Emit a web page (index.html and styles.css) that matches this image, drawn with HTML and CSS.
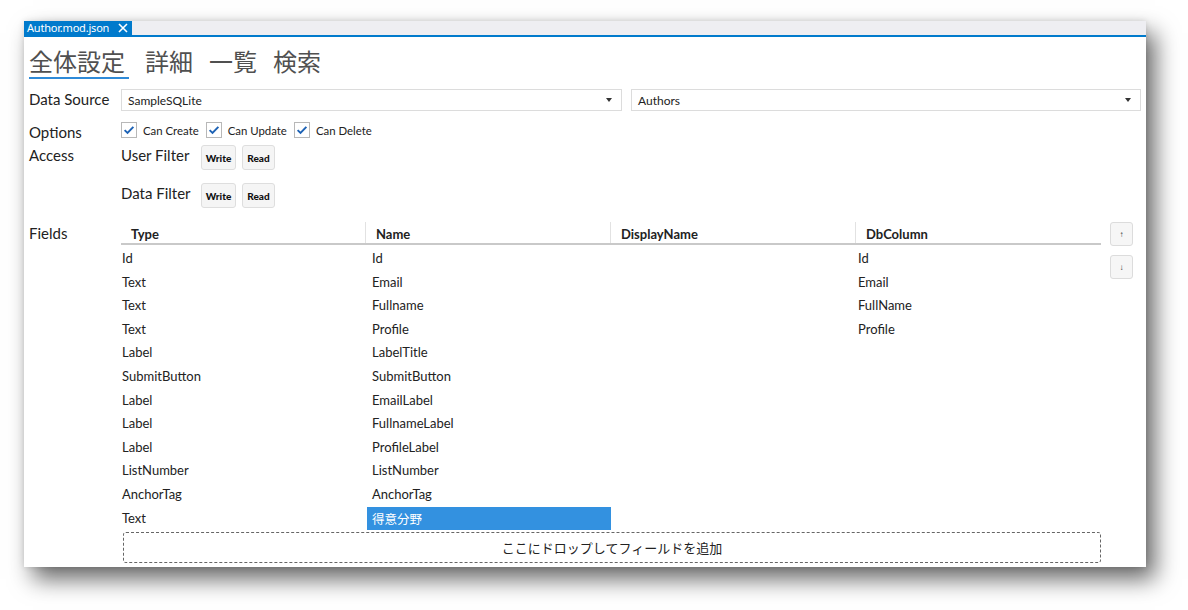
FILE: index.html
```html
<!DOCTYPE html>
<html lang="ja">
<head>
<meta charset="utf-8">
<link rel="stylesheet" href="styles.css">
</head>
<body>
<div class="window">
  <div class="tabstrip">
    <div class="doc-tab"><span>Author.mod.json</span><svg class="close" viewBox="0 0 10 10" width="10" height="10"><path d="M1 1 L9 9 M9 1 L1 9" stroke="#fff" stroke-width="1.6" fill="none"/></svg></div>
  </div>
  <div class="content">
    <div class="headings">
      <span class="heading active">全体設定</span>
      <span class="heading">詳細</span>
      <span class="heading">一覧</span>
      <span class="heading">検索</span>
    </div>

    <div class="row row-ds">
      <div class="label">Data Source</div>
      <div class="combos">
        <div class="combo c1"><span>SampleSQLite</span><span class="arrow"></span></div>
        <div class="combo c2"><span>Authors</span><span class="arrow"></span></div>
      </div>
    </div>

    <div class="row row-opt">
      <div class="label">Options</div>
      <div class="checks">
        <label class="check"><span class="box"><svg viewBox="0 0 16 16" width="14" height="14"><path d="M3 8.2 L6.3 11.4 L13 4.4" fill="none" stroke="#1d62b5" stroke-width="2.2"/></svg></span>Can Create</label>
        <label class="check"><span class="box"><svg viewBox="0 0 16 16" width="14" height="14"><path d="M3 8.2 L6.3 11.4 L13 4.4" fill="none" stroke="#1d62b5" stroke-width="2.2"/></svg></span>Can Update</label>
        <label class="check"><span class="box"><svg viewBox="0 0 16 16" width="14" height="14"><path d="M3 8.2 L6.3 11.4 L13 4.4" fill="none" stroke="#1d62b5" stroke-width="2.2"/></svg></span>Can Delete</label>
      </div>
    </div>

    <div class="row row-access">
      <div class="label">Access</div>
      <div class="filters">
        <div class="filter">
          <span class="flabel">User Filter</span>
          <button class="btn w">Write</button>
          <button class="btn r">Read</button>
        </div>
        <div class="filter">
          <span class="flabel">Data Filter</span>
          <button class="btn w">Write</button>
          <button class="btn r">Read</button>
        </div>
      </div>
    </div>

    <div class="row row-fields">
      <div class="label">Fields</div>
      <div class="fields-main">
        <div class="grid">
          <div class="ghead">
            <div class="hc">Type</div>
            <div class="hc">Name</div>
            <div class="hc">DisplayName</div>
            <div class="hc">DbColumn</div>
          </div>
          <div class="rows">
            <div class="grow"><div class="c a">Id</div><div class="c b">Id</div><div class="c cc"></div><div class="c d">Id</div></div>
            <div class="grow"><div class="c a">Text</div><div class="c b">Email</div><div class="c cc"></div><div class="c d">Email</div></div>
            <div class="grow"><div class="c a">Text</div><div class="c b">Fullname</div><div class="c cc"></div><div class="c d">FullName</div></div>
            <div class="grow"><div class="c a">Text</div><div class="c b">Profile</div><div class="c cc"></div><div class="c d">Profile</div></div>
            <div class="grow"><div class="c a">Label</div><div class="c b">LabelTitle</div><div class="c cc"></div><div class="c d"></div></div>
            <div class="grow"><div class="c a">SubmitButton</div><div class="c b">SubmitButton</div><div class="c cc"></div><div class="c d"></div></div>
            <div class="grow"><div class="c a">Label</div><div class="c b">EmailLabel</div><div class="c cc"></div><div class="c d"></div></div>
            <div class="grow"><div class="c a">Label</div><div class="c b">FullnameLabel</div><div class="c cc"></div><div class="c d"></div></div>
            <div class="grow"><div class="c a">Label</div><div class="c b">ProfileLabel</div><div class="c cc"></div><div class="c d"></div></div>
            <div class="grow"><div class="c a">ListNumber</div><div class="c b">ListNumber</div><div class="c cc"></div><div class="c d"></div></div>
            <div class="grow"><div class="c a">AnchorTag</div><div class="c b">AnchorTag</div><div class="c cc"></div><div class="c d"></div></div>
            <div class="grow"><div class="c a">Text</div><div class="c b sel">得意分野</div><div class="c cc"></div><div class="c d"></div></div>
          </div>
          <div class="drop">ここにドロップしてフィールドを追加</div>
        </div>
        <div class="movers">
          <button class="mv">↑</button>
          <button class="mv">↓</button>
        </div>
      </div>
    </div>
  </div>
</div>
</body>
</html>
```

FILE: styles.css
```css
* { box-sizing: border-box; }
html, body { margin: 0; padding: 0; background: #fff; }
body {
  font-family: Lato, "Noto Sans CJK JP", sans-serif;
  color: #222;
  width: 1188px;
  height: 610px;
  overflow: hidden;
}
.window {
  margin: 21px 0 0 24px;
  width: 1122px;
  height: 546px;
  background: #fff;
  box-shadow: 9px 12px 22px rgba(0,0,0,0.6), 0 0 6px rgba(0,0,0,0.12);
  display: flex;
  flex-direction: column;
}
.tabstrip {
  height: 16px;
  background: #eeeef2;
  border-bottom: 2px solid #007acc;
  display: flex;
}
.doc-tab {
  background: #007acc;
  color: #fff;
  font-family: "Noto Sans", sans-serif;
  font-size: 11px;
  line-height: 14px;
  height: 14px;
  width: 108px;
  padding-left: 3px;
  display: flex;
  align-items: center;
  letter-spacing: -0.2px;
}
.doc-tab .close {
  margin-left: 9px;
}
.content {
  padding: 0 5px 0 5px;
  flex: 1;
}
.headings {
  display: flex;
  gap: 16px;
  margin-top: 9px;
  height: 43px;
}
.heading {
  font-family: "Noto Sans CJK JP", sans-serif;
  font-size: 24px;
  line-height: 30px;
  color: #505050;
  height: 33px;
}
.heading.active {
  border-bottom: 2px solid #2e8ad8;
  padding-bottom: 1px;
  width: 100px;
}
.row { display: flex; }
.label {
  width: 92px;
  flex: none;
  font-size: 15px;
  color: #222;
}
.row-ds { height: 22px; align-items: center; margin-bottom: 10px; }
.row-ds .label { line-height: 20px; margin-top: -3px; }
.combos { display: flex; gap: 9px; }
.combo {
  height: 22px;
  border: 1px solid #dcdcdc;
  display: flex;
  align-items: center;
  justify-content: space-between;
  padding: 0 9px 0 6px;
  font-size: 12px;
  color: #222;
}
.combo.c1 { width: 501px; }
.combo.c2 { width: 510px; }
.arrow {
  width: 0; height: 0;
  border-left: 3.5px solid transparent;
  border-right: 3.5px solid transparent;
  border-top: 4px solid #333;
}
.row-opt { height: 18px; align-items: center; }
.row-opt .label { line-height: 18px; margin-top: 3px; }
.checks { display: flex; gap: 7px; }
.check {
  display: flex;
  align-items: center;
  font-size: 11.4px;
  color: #222;
  gap: 6px;
}
.box {
  width: 16px; height: 16px;
  border: 1px solid #b8b8b8;
  background: #fff;
  display: flex;
  align-items: center;
  justify-content: center;
}
.row-access { margin-top: 6px; height: 66px; }
.row-access .label { line-height: 18px; margin-top: 1px; }
.filters { display: flex; flex-direction: column; gap: 13px; margin-top: 0; }
.filter { display: flex; align-items: center; height: 25px; }
.flabel { font-size: 15px; width: 80px; color: #222; margin-top: -5px; }
.btn {
  height: 25px;
  border: 1px solid #dedede;
  background: #f5f5f5;
  border-radius: 3px;
  font-family: Lato, sans-serif;
  font-weight: 900;
  font-size: 10px;
  color: #111;
  padding: 0;
  margin-right: 6px;
}
.btn.w { width: 35px; }
.btn.r { width: 33px; }
.row-fields { margin-top: 11px; }
.row-fields .label { line-height: 20px; margin-top: 1px; }
.fields-main { display: flex; gap: 9px; }
.grid { width: 980px; }
.ghead {
  display: grid;
  grid-template-columns: repeat(4, 245px);
  height: 23px;
  border-bottom: 2px solid #c9c9c9;
}
.hc {
  font-size: 13px;
  font-weight: bold;
  color: #222;
  padding-left: 10px;
  padding-top: 4px;
  line-height: 16px;
  border-right: 1px solid #e2e2e2;
}
.hc:last-child { border-right: none; }
.rows { padding-top: 2px; }
.grow {
  display: grid;
  grid-template-columns: repeat(4, 245px);
  height: 23.6px;
}
.c {
  font-size: 13px;
  line-height: 23.6px;
  color: #222;
  white-space: nowrap;
}
.c.a { padding-left: 1px; }
.c.b { padding-left: 5px; margin-left: 1px; }
.c.d { padding-left: 2px; }
.c.sel {
  background: #3391e0;
  color: #fff;
  font-family: "Noto Sans CJK JP", sans-serif;
  font-size: 12.5px;
}
.drop {
  margin: 2px 0 0 2px;
  height: 31px;
  border: 1px dashed #666;
  border-radius: 3px;
  display: flex;
  align-items: center;
  justify-content: center;
  font-family: "Noto Sans CJK JP", sans-serif;
  font-size: 13px;
  color: #222;
}
.movers { display: flex; flex-direction: column; gap: 9px; }
.mv {
  width: 23px;
  height: 24px;
  border: 1px solid #dcdcdc;
  border-radius: 3px;
  background: #f6f6f6;
  font-size: 8px;
  color: #333;
  padding: 0;
}
```
